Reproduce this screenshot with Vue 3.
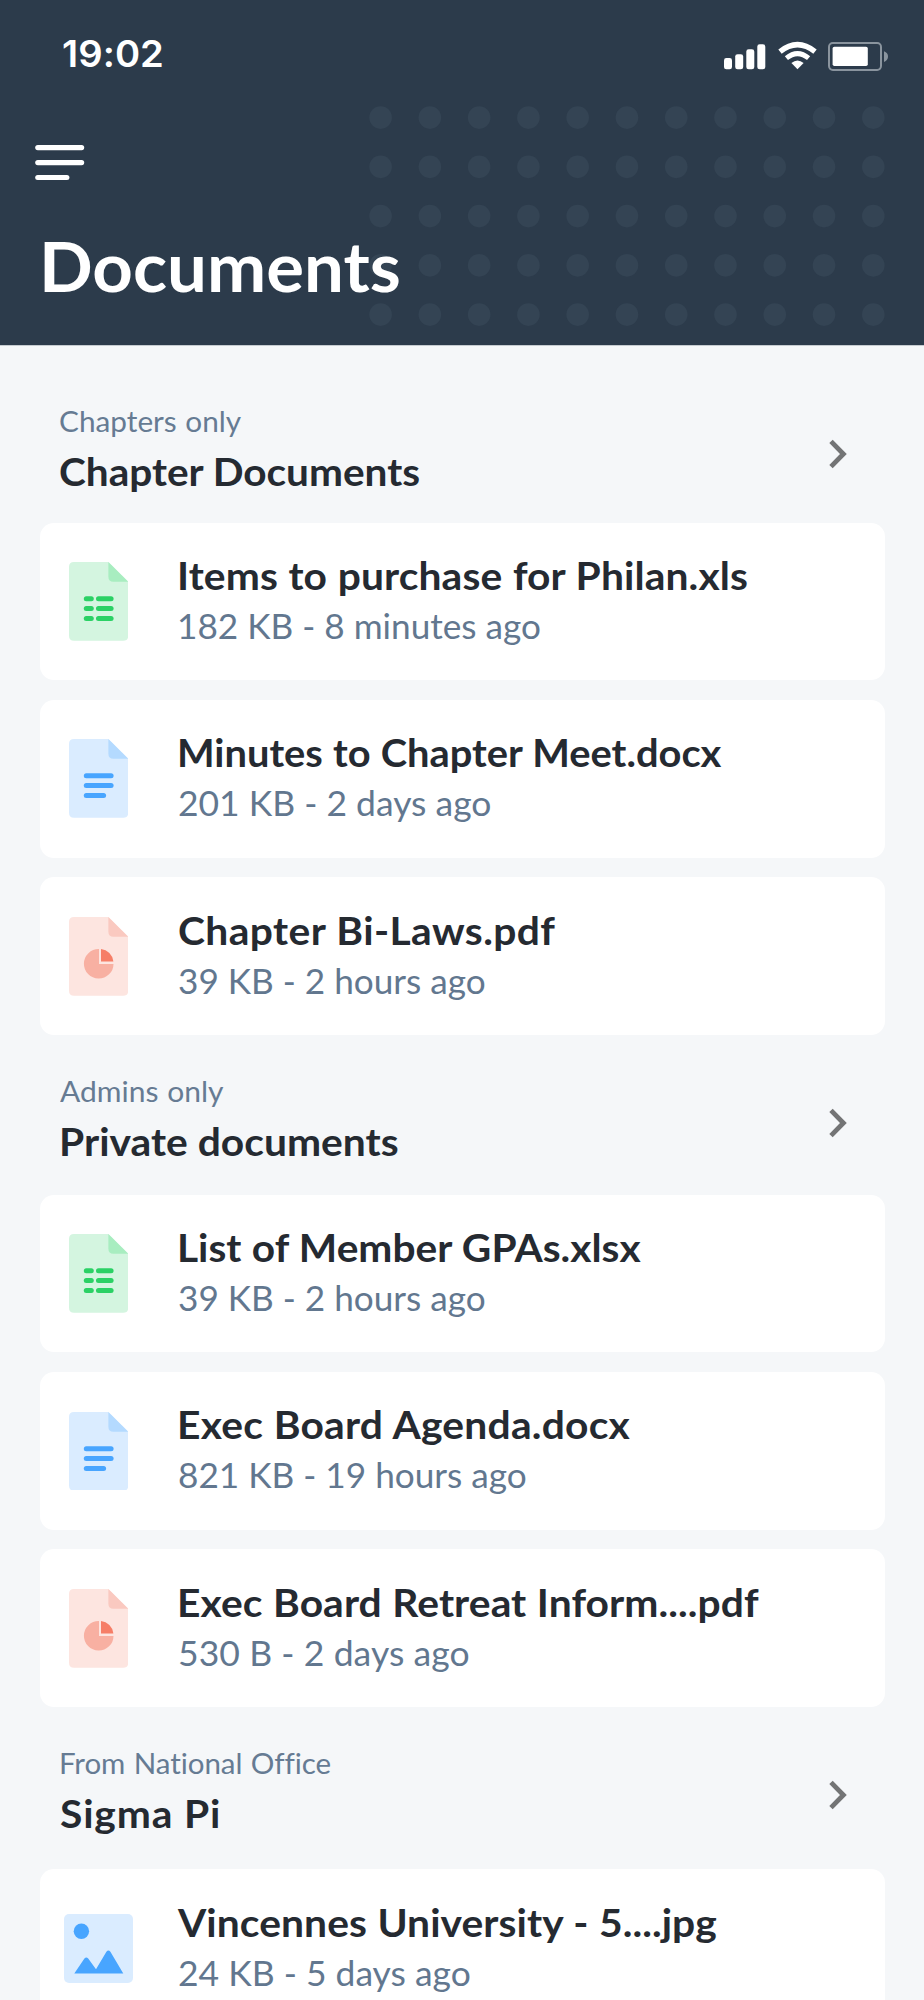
<script setup>
const sections = [
  {
    key: 'chapter',
    label: 'Chapters only',
    labelWidth: 181,
    title: 'Chapter Documents',
    titleWidth: 359.7,
    files: [
      { kind: 'sheet', name: 'Items to purchase for Philan.xls', nameWidth: 567.5, meta: '182 KB - 8 minutes ago', metaWidth: 360.6 },
      { kind: 'doc', name: 'Minutes to Chapter Meet.docx', nameWidth: 542.8, meta: '201 KB - 2 days ago', metaWidth: 311 },
      { kind: 'pdf', name: 'Chapter Bi-Laws.pdf', nameWidth: 376.8, meta: '39 KB - 2 hours ago', metaWidth: 305.3 }
    ]
  },
  {
    key: 'private',
    label: 'Admins only',
    labelWidth: 163.3,
    title: 'Private documents',
    titleWidth: 335.3,
    files: [
      { kind: 'sheet', name: 'List of Member GPAs.xlsx', nameWidth: 462.8, meta: '39 KB - 2 hours ago', metaWidth: 305.3 },
      { kind: 'doc', name: 'Exec Board Agenda.docx', nameWidth: 451.7, meta: '821 KB - 19 hours ago', metaWidth: 346.4 },
      { kind: 'pdf', name: 'Exec Board Retreat Inform....pdf', nameWidth: 578.5, meta: '530 B - 2 days ago', metaWidth: 289.3 }
    ]
  },
  {
    key: 'national',
    label: 'From National Office',
    labelWidth: 268.5,
    title: 'Sigma Pi',
    titleWidth: 159.4,
    files: [
      { kind: 'image', name: 'Vincennes University - 5....jpg', nameWidth: 540.3, meta: '24 KB - 5 days ago', metaWidth: 290.5 }
    ]
  }
]

const palettes = {
  sheet: { page: '#d4f5e0', fold: '#a8edc0', ink: '#2bd165' },
  doc: { page: '#daecff', fold: '#b4daff', ink: '#48a5ff' },
  pdf: { page: '#fde5e0', fold: '#fac9c0', ink: '#f67e67' }
}

// Optical alignment of the first letter against the left edge.
const nudges = { I: 1.5, M: 1.5, L: 1.5, E: 1.5, P: 1.4, F: 0.6, V: -2.2, A: -0.8, S: -0.6 }
const maxStretch = 1.045

const canvas = document.createElement('canvas').getContext('2d')

// Stretches and tracks a line of text so that its visible glyphs span the given width.
const vFit = {
  mounted(el, { value }) {
    const style = getComputedStyle(el)
    const text = el.textContent.trim()
    canvas.font = `${style.fontWeight} ${style.fontSize} ${style.fontFamily}`
    const m = canvas.measureText(text)
    const gaps = text.split(' ').length - 1
    const natural = m.actualBoundingBoxLeft + m.actualBoundingBoxRight + gaps * (parseFloat(style.wordSpacing) || 0)
    const stretch = Math.max(1, Math.min(maxStretch, value / natural))
    el.style.transform = `scaleX(${stretch})`
    el.style.letterSpacing = `${(value / stretch - natural) / (text.length - 1)}px`
    el.style.marginLeft = `${m.actualBoundingBoxLeft + (nudges[text[0]] || 0)}px`
  }
}
</script>

<template>
  <div class="screen">
    <header class="header">
      <svg class="dots" width="516" height="220" viewBox="0 0 516 220" aria-hidden="true">
        <template v-for="row in 5" :key="row">
          <circle v-for="col in 11" :key="col" :cx="11.6 + (col - 1) * 49.27" :cy="11.6 + (row - 1) * 49.25" r="11.3" fill="#344454" />
        </template>
      </svg>

      <div class="status">
        <span v-fit="99" class="time">19:02</span>
        <svg class="status-icons" width="167" height="31" viewBox="0 0 167 31" aria-label="Signal, Wi-Fi and battery">
          <g fill="#fff">
            <rect x="1" y="17" width="8" height="11.3" rx="2.4" />
            <rect x="12.2" y="13.2" width="8" height="15.1" rx="2.4" />
            <rect x="23.3" y="8.3" width="8" height="20" rx="2.4" />
            <rect x="34.3" y="3.3" width="8" height="25" rx="2.4" />
            <path d="M74.5 28.2 68.4 22.1Q74.5 17 80.6 22.1Z" />
          </g>
          <g fill="none" stroke="#fff">
            <path d="M57 10.6Q74.5-3.4 92 10.6" stroke-width="5.4" />
            <path d="M63.4 17.1Q74.5 8.1 85.6 17.1" stroke-width="5" />
          </g>
          <rect x="106" y="2.1" width="52" height="26.8" rx="3.8" fill="none" stroke="#8a949e" stroke-width="2" />
          <rect x="109.6" y="5.8" width="35.2" height="19.2" rx="1.8" fill="#fff" />
          <path d="M161 10.2Q165 11.8 165 15.5T161 21Z" fill="#8a949e" />
        </svg>
      </div>

      <svg class="menu" width="50" height="35" viewBox="0 0 50 35" aria-label="Menu">
        <g fill="#fff">
          <rect x="0.2" y="0" width="49" height="5.2" rx="2.6" />
          <rect x="0.2" y="15" width="49" height="5.2" rx="2.6" />
          <rect x="0.2" y="29.9" width="34.2" height="5.1" rx="2.5" />
        </g>
      </svg>

      <h1 class="heading"><span v-fit="354.7">Documents</span></h1>
    </header>

    <section v-for="section in sections" :key="section.key" class="section" :class="section.key">
      <div class="section-head">
        <div class="section-text">
          <div class="label"><span v-fit="section.labelWidth">{{ section.label }}</span></div>
          <h2 class="section-title"><span v-fit="section.titleWidth">{{ section.title }}</span></h2>
        </div>
        <svg class="chevron" width="20" height="30" viewBox="0 0 20 30" aria-hidden="true">
          <path d="M3 2.4 15.4 15 3 27.6" fill="none" stroke="#737475" stroke-width="4.8" />
        </svg>
      </div>

      <div class="files">
        <article v-for="file in section.files" :key="file.name" class="card">
          <div class="icon">
            <svg v-if="file.kind === 'image'" width="69" height="69" viewBox="0 0 69 69">
              <rect width="69" height="69" rx="5" fill="#daecff" />
              <circle cx="17.4" cy="17.3" r="7.7" fill="#48a5ff" />
              <path d="M10.3 59.4 20.4 44.6Q22.3 42.2 24.2 44.6L32 55.3 42.4 37.8Q44.4 35.2 46.4 37.8L59.3 59.4Z" fill="#48a5ff" />
            </svg>
            <svg v-else width="59.2" height="78.8" viewBox="0 0 59.2 78.8">
              <path d="M5 0H39.4L59.2 19.7V73.8Q59.2 78.8 54.2 78.8H5Q0 78.8 0 73.8V5Q0 0 5 0Z" :fill="palettes[file.kind].page" />
              <path d="M39.4 0V14.7Q39.4 19.7 44.4 19.7H59.2Z" :fill="palettes[file.kind].fold" />
              <g v-if="file.kind === 'sheet'" :fill="palettes.sheet.ink">
                <template v-for="y in [34.3, 44.1, 54]" :key="y">
                  <rect x="14.8" :y="y" width="10" height="5" rx="2.5" />
                  <rect x="27" :y="y" width="17.6" height="5" rx="2.5" />
                </template>
              </g>
              <g v-else-if="file.kind === 'doc'" :fill="palettes.doc.ink">
                <rect x="14.8" y="34.3" width="29.8" height="5" rx="2.5" />
                <rect x="14.8" y="44.1" width="29.8" height="5" rx="2.5" />
                <rect x="14.8" y="54" width="22.3" height="5" rx="2.5" />
              </g>
              <g v-else>
                <path d="M30 32V46.9H44.5A14.8 14.8 0 1 1 30 32Z" fill="#f8b0a2" />
                <path d="M32 32A14 14 0 0 1 44.4 44.4H32Z" :fill="palettes.pdf.ink" />
              </g>
            </svg>
          </div>
          <div class="info">
            <div class="name"><span v-fit="file.nameWidth">{{ file.name }}</span></div>
            <div class="meta"><span v-fit="file.metaWidth">{{ file.meta }}</span></div>
          </div>
        </article>
      </div>
    </section>
  </div>
</template>

<style>
html,
body {
  margin: 0;
  background: #f5f7f9;
}
</style>

<style scoped>
.screen {
  width: 924px;
  height: 2000px;
  overflow: hidden;
  background: #f5f7f9;
  font-family: Lato, "Open Sans", sans-serif;
  color: #252a31;
  white-space: nowrap;
}

.screen span {
  display: inline-block;
  transform-origin: left center;
  font-variant-ligatures: none;
}

.header {
  position: relative;
  box-sizing: border-box;
  height: 346px;
  background: #2c3b4b;
  border-bottom: 1px solid #c5cbd0;
  color: #fff;
}

.dots {
  position: absolute;
  left: 369px;
  top: 105.6px;
}

.status {
  display: flex;
  justify-content: space-between;
  box-sizing: border-box;
  height: 145px;
  padding: 32px 34px 0 62.8px;
}

.time {
  height: 44px;
  font: 600 36.5px/44px Inter, sans-serif;
}

.status-icons {
  margin-top: 9px;
}

.menu {
  display: block;
  margin-left: 34.5px;
}

.heading {
  position: relative;
  margin: 45.5px 0 0 44.4px;
  font-size: 68px;
  line-height: 80px;
  font-weight: 700;
}

.section {
  padding: 35px 39.3px 0 40px;
}

.section.chapter {
  padding-top: 54.4px;
}

.section-head {
  display: flex;
  justify-content: space-between;
  align-items: center;
  height: 100px;
  padding: 0 36.4px 0 20.4px;
  margin-bottom: 24.7px;
}

.chapter .section-head {
  margin-bottom: 22.2px;
}

.national .section-head {
  margin-bottom: 27.2px;
}

.section-text {
  margin-top: 2px;
}

.chapter .section-text {
  margin-top: 1px;
}

.label {
  font-size: 29.5px;
  line-height: 40px;
  word-spacing: 1px;
  color: #667b93;
}

.section-title {
  margin: 0;
  font-size: 39px;
  line-height: 60px;
  font-weight: 700;
}

.chevron {
  margin-top: 6.4px;
}

.files {
  display: flex;
  flex-direction: column;
  gap: 19.7px;
}

.card {
  display: flex;
  box-sizing: border-box;
  height: 157.7px;
  border-radius: 14px;
  background: #fff;
}

.icon {
  display: flex;
  align-items: center;
  justify-content: center;
  width: 117.4px;
  flex: none;
}

.info {
  padding: 27.3px 0 0 21.5px;
}

.name {
  font-size: 39px;
  line-height: 50px;
  font-weight: 700;
  word-spacing: 0.5px;
}

.meta {
  font-size: 34px;
  line-height: 52.6px;
  color: #62778f;
}
</style>
